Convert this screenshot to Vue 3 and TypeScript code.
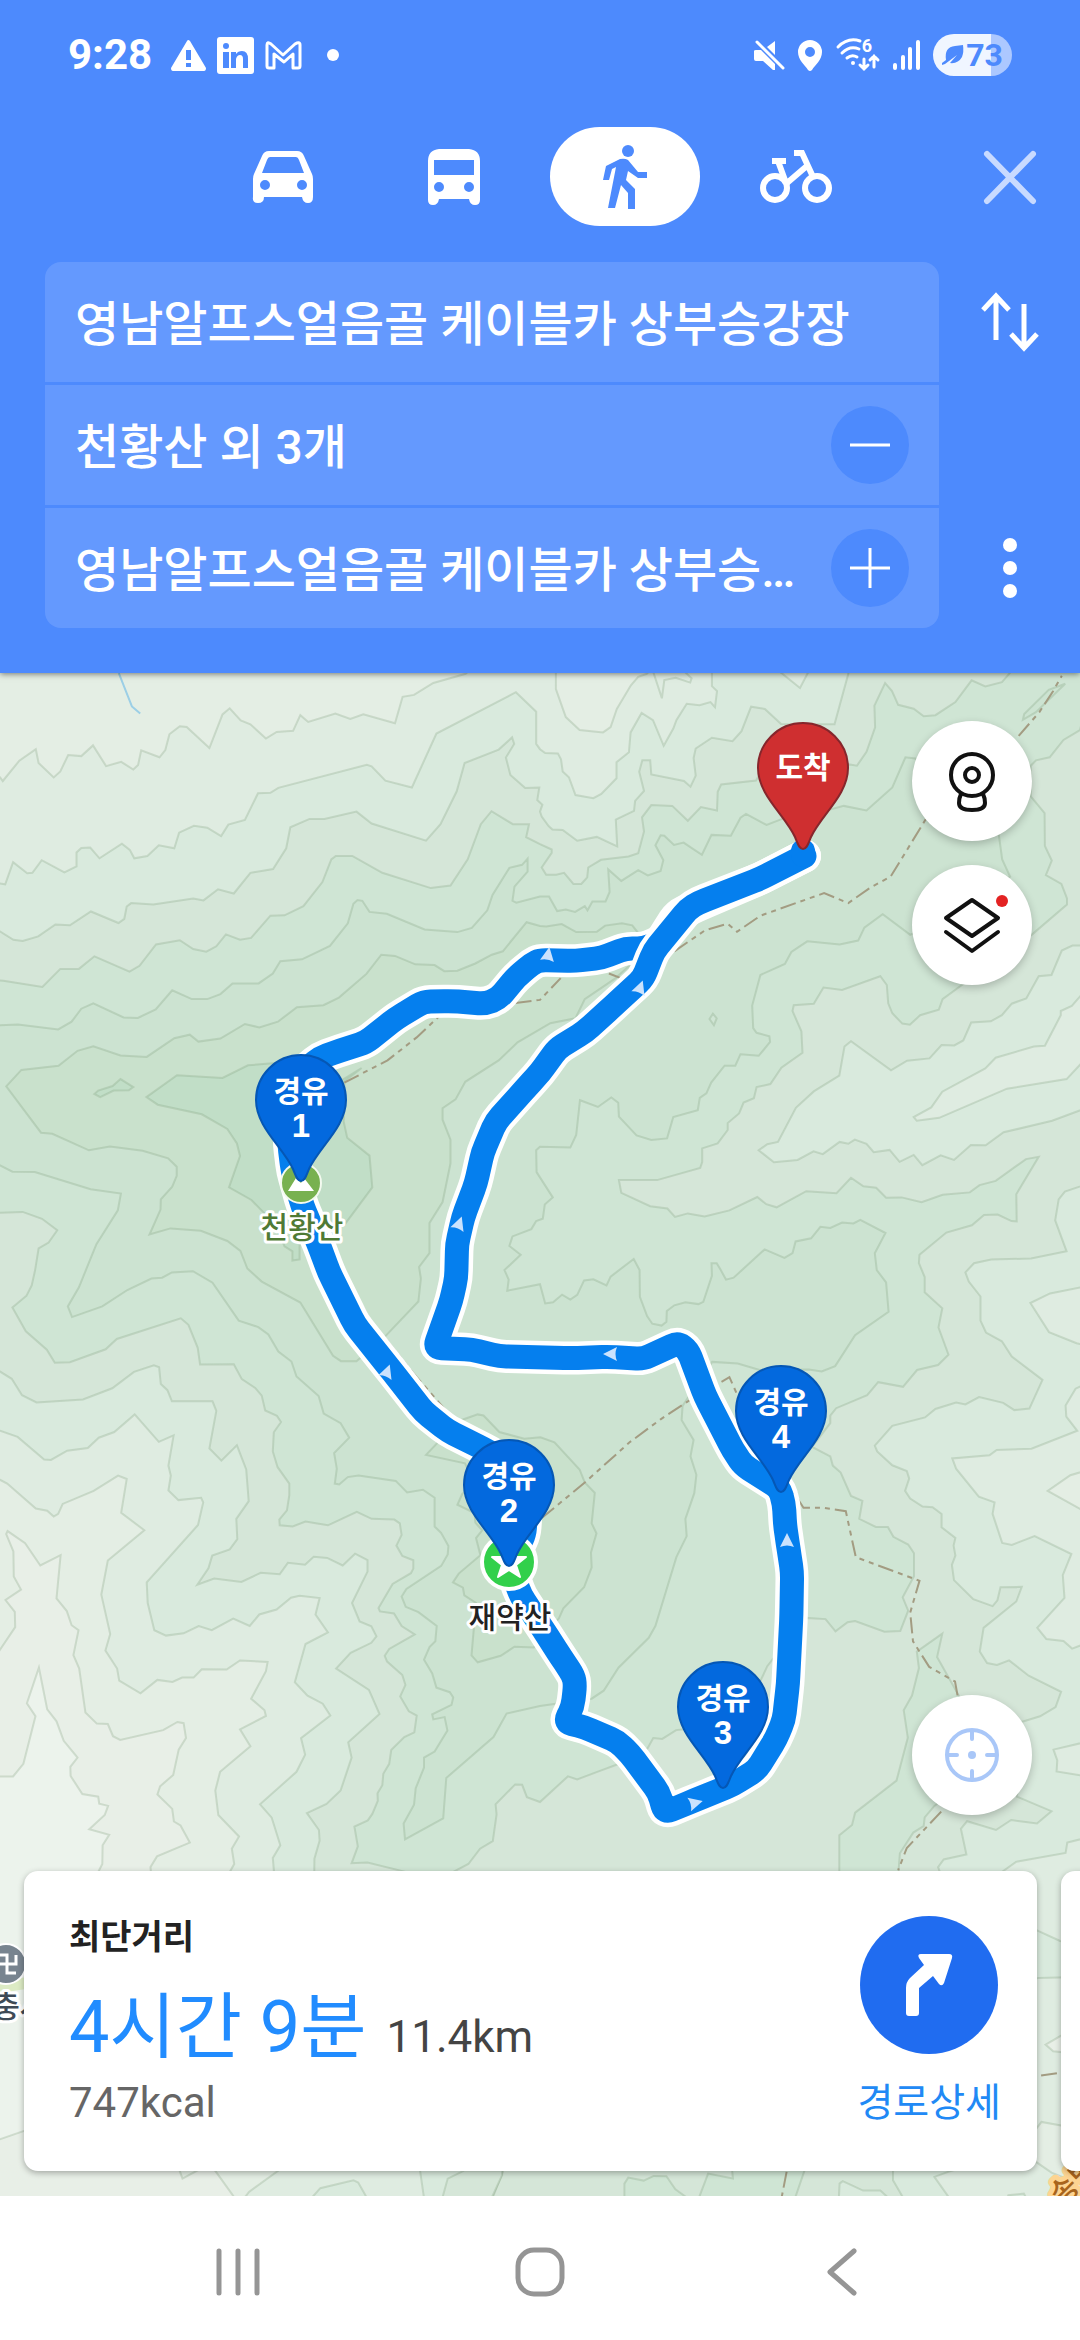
<script setup lang="ts">
import { ref } from 'vue'

type Tile = 'A' | 'B' | 'C' | 'D' | 'E' | 'F'

// Survey tiles: x origin, y origin and vertical scale on the shared survey grid.
const tiles: Record<Tile, [number, number, number]> = {
  A: [0, 0, 1],
  B: [1568, 0, 1],
  C: [0, 1568, 1],
  D: [1568, 1568, 1],
  E: [0, 3084, 0.871],
  F: [1568, 3084, 0.871],
}

type Point = [number, number]

// Reads "A 0,10 20,30 B 5,6" as a list of map points.
function read(source: string): Point[] {
  let tile = tiles.A
  const out: Point[] = []
  for (const token of source.trim().split(/\s+/)) {
    if (token in tiles) {
      tile = tiles[token as Tile]
      continue
    }
    const [x, y] = token.split(',').map(Number)
    out.push([Math.round((x + tile[0]) * 3.444) / 10, Math.round((y * tile[2] + tile[1]) * 3.827) / 10])
  }
  return out
}

function trace(source: string): string {
  return read(source).map((p) => p.join(',')).join(' ')
}

// Same trace, with every bend eased by a short curve.
function curve(source: string, radius = 7): string {
  const pts = read(source)
  const toward = (from: Point, to: Point): string => {
    const length = Math.hypot(to[0] - from[0], to[1] - from[1])
    const t = length === 0 ? 0 : Math.min(radius, length / 2) / length
    return `${(from[0] + (to[0] - from[0]) * t).toFixed(1)} ${(from[1] + (to[1] - from[1]) * t).toFixed(1)}`
  }
  let d = `M${pts[0].join(' ')}`
  for (let i = 1; i < pts.length - 1; i++) {
    d += `L${toward(pts[i], pts[i - 1])}Q${pts[i].join(' ')} ${toward(pts[i], pts[i + 1])}`
  }
  return `${d}L${pts[pts.length - 1].join(' ')}`
}

interface Band {
  fill: string
  shape: string
}

const bands: Band[] = [
  // north slope
  { fill: '#d9eadd', shape: 'A -30,683 0,683 39,705 66,708 111,696 161,665 203,667 264,631 344,661 361,650 368,618 381,609 445,613 561,597 591,602 633,573 679,584 727,530 793,520 831,466 843,411 899,389 942,389 1035,370 1079,401 1237,446 1279,403 1326,317 1349,243 1448,208 1487,176 1493,193 1469,229 1482,274 1525,308 1566,307 1560,340 B 7,352 0,370 5,383 25,408 36,417 66,418 108,446 165,436 224,461 220,391 273,368 276,342 302,316 288,266 297,236 320,236 323,273 418,290 437,305 452,276 446,230 452,205 499,177 559,186 585,160 613,96 653,102 700,141 855,142 895,10 895,-30 A -30,-30' },
  { fill: '#dfece1', shape: 'A -30,558 0,558 15,560 38,502 79,531 94,530 121,497 187,529 222,513 222,477 236,465 262,464 289,492 354,454 377,470 390,492 428,486 461,458 506,466 520,425 563,407 602,412 642,434 663,404 711,392 749,322 785,321 808,308 1065,248 1079,252 1119,289 1196,307 1267,166 1498,58 1557,109 1557,193 B 0,207 15,217 52,218 61,233 66,265 84,280 103,327 155,335 178,324 222,283 222,241 258,215 263,163 295,112 328,131 359,198 387,153 396,131 426,88 463,92 495,84 508,97 514,55 499,42 499,-30 A -30,-30' },
  { fill: '#e4eee4', shape: 'A -30,280 0,280 8,290 56,237 104,207 112,243 156,281 175,265 198,222 236,225 270,197 308,251 352,240 387,260 401,248 410,210 463,228 480,209 492,168 522,147 542,149 608,204 646,116 667,100 699,132 727,142 772,179 803,162 851,159 872,118 895,136 974,114 1017,128 1055,116 1147,139 1169,70 1202,65 1258,34 1352,10 1400,-30 -30,-30' },
  { fill: '#e4eee4', shape: 'B 46,-20 46,50 75,123 115,157 183,163 205,149 223,102 264,40 285,18 310,10 340,-20' },
  { fill: '#dfece1', shape: 'B 327,0 354,74 361,26 394,20 436,33 440,22 415,0' },
  { fill: '#dfece1', shape: 'B 690,0 755,47 782,0' },
  // middle slope
  { fill: '#cfe5d4', shape: 'A -30,810 10,812 123,828 175,781 229,781 274,748 376,788 405,773 453,717 522,706 561,729 599,736 628,722 656,691 697,705 729,700 785,642 826,641 881,617 936,554 962,495 975,486 1023,486 1110,530 1251,570 1308,563 1358,495 1396,403 1427,369 1489,403 1536,403 1528,437 1568,455 B 34,469 34,478 5,516 18,535 47,535 70,530 97,559 120,559 137,542 140,516 177,496 257,487 285,479 302,422 296,385 323,353 384,355 429,394 467,358 514,367 516,318 526,299 627,289 650,250 900,247 920,250 948,214 973,150 971,93 1002,34 1022,55 1040,91 1085,101 1114,121 1148,118 1206,84 1253,27 1293,43 1341,32 1362,10 1400,-30 1620,-30 1568,157 1520,183 1480,228 1440,236 1425,250 1425,330 1465,374 1466,460 1486,498 1469,536 1514,559 1530,597 1530,613 1430,690 1225,823 1169,860 1158,888 1104,902 1074,927 1052,924 1023,897 1011,871 1007,823 988,800 877,836 823,830 795,872 737,876 733,891 759,944 762,1000 701,1039 669,1082 629,1090 621,1119 591,1130 578,1159 545,1184 545,1202 516,1237 471,1250 471,1286 465,1301 340,1333 229,1333 236,1366 320,1401 370,1407 392,1429 429,1420 478,1428 550,1412 631,1377 657,1396 687,1404 773,1362 861,1367 903,1327 939,1349 976,1353 1005,1379 1050,1378 1108,1391 1169,1371 1248,1365 1276,1346 1323,1335 1411,1278 1448,1272 1383,1370 1384,1441 1369,1440 1329,1423 1289,1424 1254,1451 1180,1470 1102,1528 1100,1550 D 1117,18 1117,58 1168,100 1157,150 1186,221 1156,248 1095,261 1054,305 982,293 950,327 860,361 843,380 843,400 790,462 843,487 850,511 873,529 903,590 936,603 927,650 975,671 1010,671 1026,697 1069,717 1086,740 1086,800 1053,855 1069,890 1046,943 1000,945 915,917 893,920 858,944 829,912 770,909 690,1000 660,1035 600,1150 420,1200 395,1202 355,1225 329,1223 312,1250 230,1290 170,1310 108,1331 81,1323 0,1390 C 1530,1377 1516,1345 1496,1344 1439,1396 1442,1422 1431,1492 1394,1512 1360,1552 1311,1575 1180,1573 1067,1548 1021,1550 1039,1506 1029,1454 1068,1438 1081,1421 1097,1387 1096,1367 1110,1346 1113,1316 1130,1290 1136,1254 1174,1220 1203,1208 1210,1164 1187,1153 1162,1114 1177,1084 1168,1058 1124,1023 1117,1008 1130,990 1204,952 1166,930 1144,897 1103,892 1099,883 1140,820 1193,792 1200,780 1200,758 1168,747 1151,720 1166,692 1161,662 1145,652 1079,650 1036,632 952,667 887,657 850,670 812,667 811,652 833,628 840,588 840,558 806,515 792,474 795,424 816,397 804,381 770,367 760,328 741,308 702,285 679,246 581,247 574,203 547,143 525,126 339,180 307,207 203,241 159,242 136,208 75,160 36,98 77,67 92,40 A 102,1568 112,1511 141,1496 166,1464 122,1434 66,1416 -30,1419' },
  { fill: '#cce3d1', shape: 'A -30,930 52,926 169,939 208,919 236,885 271,871 359,908 400,909 452,887 500,837 557,860 602,860 640,847 675,819 751,819 792,793 814,761 877,756 958,721 1010,662 1026,611 1038,601 1052,603 1073,632 1123,637 1233,678 1328,685 1370,674 1415,628 1430,588 1479,517 1516,509 1532,493 1532,527 1494,566 1488,603 1499,608 1568,592 B 26,592 50,630 75,626 102,632 130,617 138,628 152,605 190,605 202,580 198,521 236,551 285,523 313,537 350,525 358,497 335,458 350,432 361,433 389,457 417,451 470,483 498,431 554,433 582,386 598,376 658,405 720,383 820,370 882,355 948,367 1023,307 1061,228 1090,231 1332,430 1342,495 1365,540 1200,640 1075,692 995,638 942,673 924,707 870,717 776,709 730,737 711,768 640,797 616,877 619,936 629,948 666,957 668,972 635,1008 582,1004 567,1034 536,1034 497,1078 483,1106 464,1118 458,1150 387,1168 369,1224 323,1228 280,1216 229,1167 227,1131 207,1117 168,1142 116,1124 105,1215 88,1248 0,1246 A 1557,1255 1558,1312 B 37,1378 14,1397 8,1434 A 1557,1440 1543,1461 1488,1480 1479,1505 1512,1528 1465,1568 C 1477,25 1473,54 1568,37 D 15,87 38,84 64,64 88,77 108,65 128,27 155,24 193,40 205,17 B 272,1539 D 289,0 290,70 311,120 326,140 353,145 367,135 368,107 390,92 422,84 460,89 474,83 499,15 B 498,1550 513,1550 D 525,0 540,25 562,20 B 652,1514 710,1536 733,1524 742,1493 787,1485 814,1455 843,1458 877,1444 910,1446 930,1437 1003,1471 972,1524 D 978,0 1005,32 1012,109 915,170 857,251 818,265 780,260 640,262 574,244 500,240 414,355 411,392 446,444 437,487 454,535 448,583 422,650 426,695 396,750 335,930 316,961 228,1039 185,1099 150,1120 0,1139 C 1471,1159 1433,1220 1296,1327 1287,1433 1176,1488 1172,1446 1202,1397 1207,1354 1231,1300 1231,1274 1262,1258 1299,1203 1291,1168 1258,1174 1255,1161 1311,1136 1316,1117 1306,1103 1267,1091 1255,1054 1231,1018 1247,985 1264,970 1268,930 1215,894 1178,880 1166,853 1180,833 1281,773 1300,743 1302,721 1281,687 1262,670 1262,595 1228,574 1182,581 1149,551 1041,537 1010,541 985,560 972,558 978,519 970,478 1014,438 989,400 940,375 925,329 861,278 846,239 808,213 779,168 750,149 693,132 617,33 560,3 499,6 471,20 440,22 370,52 297,95 209,123 197,95 229,45 A 280,1500 342,1412 351,1368 263,1357 101,1312 36,1311 -30,1280' },
  { fill: '#c9e1cc', shape: 'A 18,1088 62,1045 170,1034 225,995 271,983 350,1007 426,1011 506,962 551,953 576,971 640,963 711,925 753,934 807,919 862,881 939,876 984,856 1064,794 1107,744 1147,747 1206,769 1262,771 1290,787 1328,786 1380,767 1428,744 1460,735 1529,659 1568,669 B 18,670 63,664 105,685 165,684 189,668 238,662 268,667 283,685 265,768 220,805 130,860 103,910 30,923 A 1503,973 1448,1020 1351,1076 1323,1122 1285,1145 1285,1175 1308,1227 1308,1289 1285,1390 1247,1445 1247,1524 1217,1560 1222,1590 1215,1650 1120,1740 1035,1806 990,1806 967,1792 872,1653 760,1598 718,1564 698,1518 660,1492 583,1465 495,1459 434,1475 466,1410 467,1383 500,1350 513,1322 513,1298 488,1276 414,1256 319,1245 258,1255 152,1212 119,1209' },
  { fill: '#c1dec7', shape: 'A 425,1116 514,1059 646,1066 720,1033 800,1027 960,1090 1050,1040 1000,1075 998,1180 1008,1222 1073,1269 1081,1352 1000,1450 870,1500 870,1540 849,1543 849,1519 826,1506 800,1450 730,1385 665,1352 697,1270 688,1237 660,1199 586,1161 458,1136' },
  { fill: '#c1dec7', shape: 'A 274,1108 285,1099 327,1087 350,1069 387,1090 374,1098 330,1099 291,1116' },
  { fill: '#c9e1cc', shape: 'C 1237,483 1330,395 1387,377 1404,380 1450,423 1522,441 D 1,437 42,450 115,521 130,555 159,582 150,662 164,688 148,738 150,777 128,829 68,884 55,910 C 1550,986 1494,984 1454,1008 1387,1025 1369,1007 1382,870 1348,850 1344,830 1315,816 1332,793 1395,745 1382,700 1400,680 1380,660 1378,635 1328,613 1342,585 1380,560 1350,505' },
  { fill: '#cfe5d4', shape: 'B 492,912 502,898 513,910 505,928' },
  { fill: '#cce3d1', shape: 'B 1402,130 1406,115 1477,52 1525,36 1440,110' },
  // east valleys
  { fill: '#d9eadd', shape: 'B 1600,720 1546,720 1515,733 1485,797 1448,800 1412,858 1370,872 1341,902 1309,918 1252,921 1229,968 1203,981 1166,980 1131,1015 1066,1021 1019,1046 903,970 884,984 869,1060 795,1101 743,1144 691,1233 660,1239 635,1255 679,1286 748,1280 794,1258 821,1265 870,1233 895,1238 914,1227 948,1238 969,1260 1015,1254 1044,1285 1085,1267 1110,1294 1163,1268 1202,1280 1251,1241 1294,1242 1346,1208 1487,1178 1600,1140' },
  { fill: '#dfece1', shape: 'B 1600,1000 1529,1069 1356,1094 1159,1170 1094,1178 1085,1168 1136,1143 1168,1102 1293,1041 1323,1013 1434,984 1466,982 1512,902 1512,891 1544,878 1600,820' },
  { fill: '#d9eadd', shape: 'B 1600,1340 1524,1363 1506,1383 1496,1438 1529,1519 1426,1538 1310,1540 1260,1550 D 1235,6 1245,30 1279,69 1279,132 1295,163 1341,186 1370,226 1459,287 1421,362 1377,366 1345,347 1275,332 1235,351 1208,346 1148,363 1118,385 1023,407 972,459 979,474 1023,510 1065,525 1072,545 1060,577 1075,597 1111,618 1140,620 1166,637 1166,672 1206,700 1201,720 1206,746 1196,770 1202,810 1258,860 1314,878 1328,863 1337,829 1399,828 1383,866 1288,935 1277,997 1298,1027 1327,1032 1362,1020 1419,1060 1513,1102 1497,1142 1452,1166 1400,1180 1385,1376 1485,1414 1443,1446 1368,1437 1324,1463 1240,1440 1222,1460 1238,1527 1172,1540 1156,1560 1180,1620 1100,1900 F 1025,965 1025,990 1070,1070 1650,1070' },
  { fill: '#dfece1', shape: 'D 1600,40 1481,61 1424,86 1478,162 1558,191 1600,200' },
  { fill: '#dfece1', shape: 'D 1600,290 1555,310 1526,354 1528,383 1560,420 1427,467 1326,470 1305,484 1197,492 1208,519 1274,592 1320,607 1314,637 1342,713 1370,718 1436,695 1543,742 1518,797 1523,857 1444,935 1470,964 1520,969 1545,989 1600,970' },
  { fill: '#e4eee4', shape: 'D 1600,520 1540,536 1474,577 1600,640' },
  { fill: '#dfece1', shape: 'D 1600,1230 1491,1253 1502,1281 1500,1310 1600,1325' },
  { fill: '#dfece1', shape: 'D 1600,1480 1531,1496 1526,1523 1383,1546 1330,1580 F 1400,220 1510,272 1600,280' },
  { fill: '#dfece1', shape: 'F 1400,400 1447,383 1600,380 1600,1070 1200,1060 1145,980 1185,965 1400,900' },
  { fill: '#e8efe7', shape: 'F 1600,500 1513,556 1468,583 1490,603 1600,615' },
  { fill: '#e4eee4', shape: 'F 1430,850 1456,815 1513,826 1600,840 1600,990 1540,990 1485,967 1440,935' },
  { fill: '#cfe5d4', shape: 'D 1094,997 1168,950 1153,1011 1216,1112 1250,1200 1220,1350 1145,1400 1117,1430 1114,1453 1084,1470 1045,1524 1030,1700 869,1700 869,1477 906,1450 915,1418 1035,1334 1068,1222 1056,1150 1080,1112 1100,1040' },
  { fill: '#cfe5d4', shape: 'F 245,1060 245,1000 256,982 301,991 330,977 367,978 393,1017 450,1060' },
  { fill: '#cfe5d4', shape: 'F 455,1060 488,970 560,985 556,940 775,940 735,1060' },
  { fill: '#d9eadd', shape: 'F 867,1060 870,1000 879,993 938,1021 988,1021 1030,1060' },
  { fill: '#d9eadd', shape: 'F 1350,1060 1360,1035 1405,1030 1420,1060' },
  // west slope
  { fill: '#d9eadd', shape: 'C -30,265 0,265 34,284 64,327 106,346 241,338 326,309 389,266 447,249 462,254 467,298 486,314 499,343 617,343 628,368 608,466 643,498 688,458 715,521 722,604 686,650 689,703 667,730 616,746 605,779 573,822 622,806 701,815 757,791 812,795 836,765 886,770 911,749 950,752 995,772 1031,741 1067,758 1067,788 1022,870 1044,918 1078,931 1093,957 1078,974 1018,1000 976,1041 1071,1097 1102,1160 1011,1234 1021,1274 989,1360 948,1395 891,1419 926,1463 928,1491 913,1538 912,1620 E 1300,700 1460,965 1420,1070 -30,1070' },
  { fill: '#dfece1', shape: 'C -30,420 0,420 51,436 128,495 148,496 195,472 255,465 287,438 332,423 391,377 461,449 504,432 489,511 496,537 489,576 518,601 584,595 590,607 575,666 426,816 429,870 448,941 482,955 533,949 577,930 615,941 677,911 725,930 753,900 803,887 845,856 870,851 928,857 916,900 952,947 887,977 856,1077 893,1112 937,1133 959,1164 874,1223 886,1266 861,1311 755,1396 789,1431 814,1503 792,1536 800,1620 E 1218,950 1235,1070 -30,1070' },
  { fill: '#e4eee4', shape: 'C -30,548 0,548 21,558 104,623 137,629 156,644 169,637 182,611 272,577 343,537 368,546 352,634 419,680 313,759 294,848 320,951 306,994 340,1041 346,1073 408,1106 457,1071 501,1076 529,1065 562,1065 586,1043 658,1044 697,1020 777,1024 772,1048 729,1120 768,1150 772,1165 697,1200 727,1244 639,1311 625,1360 634,1424 694,1480 673,1512 680,1552 650,1600 E 850,930 723,1025 690,1070 -30,1070' },
  { fill: '#e8efe7', shape: 'C -30,1030 0,992 44,933 43,893 16,862 61,835 40,801 39,735 18,690 22,682 73,714 117,772 176,745 164,858 194,891 208,928 228,941 213,1006 230,1041 248,1156 281,1185 313,1186 328,1218 349,1228 474,1202 515,1181 533,1184 540,1223 519,1253 503,1319 465,1349 457,1370 500,1408 505,1441 524,1451 551,1496 456,1532 437,1560 E 500,900 530,985 610,940 700,1070 -30,1070' },
  { fill: '#ecf3ec', shape: 'C -30,1323 38,1323 68,1290 103,1166 78,1132 113,1039 137,1148 164,1179 185,1230 225,1274 204,1298 205,1322 239,1369 285,1376 288,1394 314,1400 304,1424 259,1461 317,1476 298,1503 297,1552 270,1600 E 200,800 70,842 -30,878' },
  { fill: '#d9eadd', shape: 'E 890,1060 930,1014 1026,990 1040,997 1075,1060' },
  { fill: '#d5e6d8', shape: 'E 1280,1060 1300,985 1350,960 1458,960 1458,975 1420,1060' },
]

const trails: string[] = [
  'A 1000,1078 1125,1020 1210,960 1275,905',
  'A 1497,870 1568,862 B 60,805',
  'B 200,793 235,805 262,795',
  'B 390,735 480,680 545,663 572,684 640,642 825,583 895,609 960,568 1018,540 1120,390',
  'B 1390,172 1450,110 1490,55 1515,15',
  'C 1050,90 1080,140 1120,180 1160,225 1210,280 1300,372',
  'D 5,648 130,555 260,450 350,390 435,340',
  'D 527,292 550,280 575,330',
  'D 750,600 765,621 820,621 888,630 917,750 1102,812 1075,895 1083,970 1130,1037 1205,1075 1213,1115',
  'D 1165,1415 1065,1510 1040,1568',
  'F 1455,676 1513,667',
  'F 716,965 700,1050',
]

const routeLegs: string[] = [
  'B 768,486 640,545 470,610 400,640 350,710 300,728 250,727 180,752 100,760 0,758 A 1545,768 1500,802 1448,858 1410,872 1310,865 1230,867 1150,910 1062,973 985,995 930,1013 880,1050 845,1130 840,1240 850,1310 878,1400 925,1500 C 955,5 1030,142 1130,255 1230,370 1300,420 1400,465 1490,510 1530,600 1523,690 1480,770',
  'C 1480,770 1512,850 D 10,940 60,1010 97,1060 102,1085 95,1140 72,1182 130,1195 225,1232 262,1265 345,1365 362,1418 450,1385 560,1345 630,1305 685,1225 708,1175 720,1080 730,900 732,790 722,730 712,670 708,610 695,570 590,510 560,470 480,330 430,210 400,190 300,232 200,227 90,230 C 1450,225 1370,208 1262,203 1310,80 1325,20 A 1327,1500 1345,1430 1382,1340 1402,1260 1440,1180 1530,1090 B 0,1052 50,990 130,945 210,880 300,805 330,735 430,625 460,608 640,545 768,486',
]

const arrows = [
  { x: 548, y: 285, turn: 10 },
  { x: 640, y: 318, turn: 20 },
  { x: 459, y: 554, turn: 20 },
  { x: 387, y: 702, turn: 20 },
  { x: 611, y: 684, turn: -90 },
  { x: 787, y: 871, turn: 0 },
  { x: 695, y: 1133, turn: 75 },
]

const pins = [
  { x: 301, y: 511, no: '1' },
  { x: 509, y: 896, no: '2' },
  { x: 723, y: 1118, no: '3' },
  { x: 781, y: 822, no: '4' },
]

const pinPath = 'M0 0c-4 0-5-5-8-12c-10-22-37-42-37-69a45 45 0 0 1 90 0c0 27-27 47-37 69c-3 7-4 12-8 12z'

const origin = ref('영남알프스얼음골 케이블카 상부승강장')
const via = ref('천황산 외 3개')
const destination = ref('영남알프스얼음골 케이블카 상부승강장')
const mode = ref('walk')
</script>

<template>
  <div class="screen">
    <header class="header">
      <div class="status">
        <div class="status-left">
          <span class="clock">9:28</span>
          <svg width="35" height="31" viewBox="0 0 35 31" aria-hidden="true">
            <path fill="#fff" fill-rule="evenodd" d="M16 1q1-2 3 0l16 27q0 3-2 3H2q-2 0-2-3zM15 10h5v10h-5zM15 23h5v4h-5z" />
          </svg>
          <svg width="37" height="37" viewBox="0 0 37 37" aria-hidden="true">
            <rect width="37" height="37" rx="3" fill="#fff" />
            <circle cx="9" cy="9" r="3" fill="#4d8afd" />
            <path fill="#4d8afd" d="M6 15h6v16H6zM14 15h5v2q2-3 6-3 6 0 6 8v9h-5v-9q0-4-3-4t-4 4v9h-5z" />
          </svg>
          <svg width="37" height="29" viewBox="0 0 37 29" aria-hidden="true">
            <path fill="none" stroke="#fff" stroke-width="3" stroke-linejoin="round" d="M9 27H4q-2 0-2-2V4q0-4 4-1l12 11L30 3q5-3 5 1v21q0 2-2 2h-5V13l-9 8-10-8z" />
          </svg>
          <span class="dot"></span>
        </div>
        <div class="status-right">
          <svg width="31" height="31" viewBox="0 0 31 31" aria-hidden="true">
            <path fill="#fff" d="M0 11q0-1 2-1h5l14 14v6h-2L9 21H2q-2 0-2-2zM13 7l8-6v14z" />
            <path d="M3 2l26 26" stroke="#fff" stroke-width="3" stroke-linecap="round" />
          </svg>
          <svg width="25" height="31" viewBox="0 0 25 31" aria-hidden="true">
            <path fill="#fff" fill-rule="evenodd" d="M12 0a12 12 0 0 1 12 12c0 8-7 13-10 18q-2 2-4 0C7 25 0 20 0 12A12 12 0 0 1 12 0zm0 7a5 5 0 1 0 0 10 5 5 0 0 0 0-10z" />
          </svg>
          <svg width="44" height="34" viewBox="0 0 44 34" aria-hidden="true">
            <g fill="none" stroke="#fff" stroke-width="3" stroke-linecap="round">
              <path d="M2 9q10-10 22-6M6 15q8-8 17-4M11 20q5-4 10-1" />
              <path d="M28 21v10M24 27l4 4 4-4M38 29V18M34 22l4-4 4 4" />
            </g>
            <circle cx="17" cy="25" r="2" fill="#fff" />
            <text x="31" y="14" text-anchor="middle" class="wifi-no">6</text>
          </svg>
          <svg width="27" height="31" viewBox="0 0 27 31" aria-hidden="true">
            <path d="M2 25v3M10 17v11M17 9v19M25 2v26" stroke="#fff" stroke-width="4" stroke-linecap="round" />
          </svg>
          <span class="battery">
            <svg width="22" height="22" viewBox="0 0 22 22" aria-hidden="true">
              <path fill="#4d8afd" d="M4 16Q2 3 13 2l8-1q1 7-1 12-4 7-12 6l7-8-12 9-3 1v-2z" />
            </svg>
            <span>73</span>
          </span>
        </div>
      </div>

      <div class="modes">
        <nav class="tabs" aria-label="이동수단">
          <button type="button" class="tab" :class="{ active: mode === 'car' }" aria-label="자동차" @click="mode = 'car'">
            <svg width="60" height="54" viewBox="0 0 60 54">
              <path fill="currentColor" fill-rule="evenodd" d="M16 1h28q5 0 7 5l8 18q1 2 1 5v18q0 6-5 6t-6-6H11q0 6-6 6t-5-6V29q0-3 1-5L9 6q2-5 7-5zm1 6q-2 0-3 3L9 23h42L46 10q-1-3-3-3zM12 30a5 5 0 1 0 0 10 5 5 0 0 0 0-10zm37 0a5 5 0 1 0 0 10 5 5 0 0 0 0-10z" />
            </svg>
          </button>
          <button type="button" class="tab" :class="{ active: mode === 'bus' }" aria-label="대중교통" @click="mode = 'bus'">
            <svg width="52" height="56" viewBox="0 0 52 56">
              <path fill="currentColor" fill-rule="evenodd" d="M11 0h30q11 1 11 12v39q0 5-5 5t-6-6H11q-1 6-6 6t-5-5V12Q0 1 11 0zM6 11v15h40V11zm5 22a5 5 0 1 0 0 10 5 5 0 0 0 0-10zm30 0a5 5 0 1 0 0 10 5 5 0 0 0 0-10z" />
            </svg>
          </button>
          <button type="button" class="tab" :class="{ active: mode === 'walk' }" aria-label="도보" @click="mode = 'walk'">
            <svg width="44" height="64" viewBox="0 0 44 64">
              <circle cx="25" cy="6" r="6" fill="currentColor" />
              <path fill="currentColor" d="M3 21l14-7q5-1 8 1l10 12h9v6h-9l-10-7-2 9 9 9v20h-7V48l-7-8-6 23H5l8-41-4 2-3 11H0z" />
            </svg>
          </button>
          <button type="button" class="tab" :class="{ active: mode === 'bike' }" aria-label="자전거" @click="mode = 'bike'">
            <svg width="72" height="54" viewBox="0 0 72 54" fill="none" stroke="currentColor" stroke-width="6">
              <circle cx="15" cy="38" r="12" />
              <circle cx="57" cy="38" r="12" />
              <path d="M12 11h14M18 11l8 22M34 3h8l12 26M48 15L27 33" />
            </svg>
          </button>
        </nav>
        <button type="button" class="icon-btn" aria-label="닫기">
          <svg width="54" height="54" viewBox="0 0 54 54">
            <path d="M4 4l46 47M50 4L4 51" stroke="#c8daff" stroke-width="6" stroke-linecap="round" />
          </svg>
        </button>
      </div>

      <div class="route-form">
        <div class="fields">
          <div class="field">
            <input v-model="origin" type="text" aria-label="출발지" />
          </div>
          <div class="field">
            <input v-model="via" type="text" aria-label="경유지" />
            <button type="button" class="round" aria-label="경유지 삭제">
              <svg width="40" height="40" viewBox="0 0 40 40"><path d="M0 20h40" stroke="#fff" stroke-width="3" /></svg>
            </button>
          </div>
          <div class="field">
            <input v-model="destination" type="text" aria-label="도착지" />
            <button type="button" class="round" aria-label="경유지 추가">
              <svg width="40" height="40" viewBox="0 0 40 40"><path d="M0 20h40M20 0v40" stroke="#fff" stroke-width="3" /></svg>
            </button>
          </div>
        </div>
        <div class="side">
          <button type="button" class="icon-btn tall" aria-label="출발지와 도착지 바꾸기">
            <svg width="58" height="58" viewBox="0 0 58 58" fill="none" stroke="#fff" stroke-width="5">
              <path d="M15 47V4M2 17L15 3l13 14M43 11v43M30 41l13 14 13-14" />
            </svg>
          </button>
          <button type="button" class="icon-btn tall" aria-label="더보기">
            <svg width="14" height="60" viewBox="0 0 14 60" fill="#fff">
              <circle cx="7" cy="7" r="7" /><circle cx="7" cy="30" r="7" /><circle cx="7" cy="53" r="7" />
            </svg>
          </button>
        </div>
      </div>
    </header>

    <main class="map">
      <svg class="terrain" viewBox="0 3 1080 1523" preserveAspectRatio="xMidYMid slice" role="img" aria-label="도보 경로 지도">
        <rect y="-200" width="1080" height="2000" fill="#d5e6d8" />
        <polygon v-for="(band, i) in bands" :key="i" class="band" :points="trace(band.shape)" :fill="band.fill" />
        <polyline :points="trace('A 345,8 383,95 407,114')" class="stream" />
        <polyline v-for="(trail, i) in trails" :key="i" class="trail" :points="trace(trail)" />

        <template v-for="(leg, i) in routeLegs" :key="i">
          <path class="casing" :d="curve(leg)" />
          <path class="route" :d="curve(leg)" />
        </template>
        <path class="route-start" d="M803 181v4" />
        <path
          v-for="(a, i) in arrows"
          :key="i"
          d="M0-8l7 14q-7-3-14 0z"
          fill="#cbe2fd"
          :transform="`translate(${a.x} ${a.y}) rotate(${a.turn})`"
        />

        <g>
          <circle cx="301" cy="513" r="20" fill="#78b150" stroke="#f4faf0" stroke-width="2" />
          <path fill="#fff" d="M288 521l8-13 5 5 3-5 10 13z" />
          <text x="302" y="568" class="poi peak">천황산</text>
        </g>
        <g>
          <circle cx="509" cy="892" r="27" fill="#32d04b" stroke="#fff" stroke-width="4" />
          <path fill="#fff" stroke="#fff" stroke-width="2" stroke-linejoin="round" d="M509 875l4 12h13l-10 8 4 12-11-7-11 7 4-12-10-8h13z" />
          <text x="510" y="958" class="poi">재약산</text>
        </g>
        <g>
          <path fill="#dcebc4" d="M0 1313l26-6v12l-26 4z" />
          <circle cx="6" cy="1294" r="20" fill="#78848f" stroke="#fff" stroke-width="2" />
          <path d="M-2 1303v-9h18v-9M-2 1285h9v18h9" fill="none" stroke="#fff" stroke-width="3" />
          <text x="6" y="1347" class="poi temple">표충사</text>
        </g>
        <text x="1062" y="1538" class="road" transform="rotate(-45 1062 1538)">송백로</text>

        <g v-for="pin in pins" :key="pin.no" :transform="`translate(${pin.x} ${pin.y})`">
          <path :d="pinPath" fill="#0369de" stroke="#0557b5" stroke-width="2" />
          <text y="-79" class="pin-label">경유</text>
          <text y="-44" class="pin-no">{{ pin.no }}</text>
        </g>
        <g transform="translate(803 179)">
          <path :d="pinPath" fill="#cf2f30" stroke="#86262c" stroke-width="2" />
          <text y="-71" class="pin-label">도착</text>
        </g>
      </svg>

      <div class="tools">
        <button type="button" class="tool" aria-label="거리뷰">
          <svg width="60" height="60" viewBox="0 0 60 60" fill="none" stroke="#111" stroke-width="4">
            <circle cx="30" cy="24" r="21" />
            <circle cx="30" cy="24" r="7" />
            <path d="M19 43q-2 4-2 9 0 7 13 7t13-7q0-5-2-9" />
          </svg>
        </button>
        <button type="button" class="tool" aria-label="지도 종류">
          <svg width="60" height="60" viewBox="0 0 60 60" fill="none" stroke="#111" stroke-width="4" stroke-linejoin="round" stroke-linecap="round">
            <path d="M30 5l26 18-26 18L4 23zM4 37l26 19 26-19" />
          </svg>
          <span class="badge"></span>
        </button>
      </div>

      <div class="bottom">
        <button type="button" class="tool locate" aria-label="현재 위치">
          <svg width="56" height="56" viewBox="0 0 56 56" fill="none" stroke="#a9c7f8" stroke-width="4" stroke-linecap="round">
            <circle cx="28" cy="28" r="25" />
            <path d="M28 4v8M28 44v8M4 28h9M43 28h9" />
            <circle cx="28" cy="28" r="4" fill="#a9c7f8" stroke="none" />
          </svg>
        </button>
        <div class="cards">
          <section class="card">
            <div class="summary">
              <h2>최단거리</h2>
              <p class="time"><strong>4시간 9분</strong><span>11.4km</span></p>
              <p class="kcal">747kcal</p>
            </div>
            <button type="button" class="detail">
              <span class="detail-icon">
                <svg width="46" height="62" viewBox="0 0 46 62" fill="#fff">
                  <path d="M0 59V34q0-6 4-10l14-13-5-7q-2-4 2-4h28q4 0 3 4l-8 25q-2 4-5 1l-6-8-14 12v25q0 3-3 3H3q-3 0-3-3z" />
                </svg>
              </span>
              <span>경로상세</span>
            </button>
          </section>
          <section class="card next" aria-hidden="true"></section>
        </div>
      </div>
    </main>

    <nav class="system-bar" aria-label="시스템">
      <button type="button" aria-label="최근 앱">
        <svg width="44" height="48" viewBox="0 0 44 48"><path d="M3 3v42M22 3v42M41 3v42" stroke="#959595" stroke-width="5" stroke-linecap="round" /></svg>
      </button>
      <button type="button" aria-label="홈">
        <svg width="48" height="48" viewBox="0 0 48 48"><rect x="2" y="2" width="44" height="44" rx="16" fill="none" stroke="#959595" stroke-width="5" /></svg>
      </button>
      <button type="button" aria-label="뒤로">
        <svg width="30" height="48" viewBox="0 0 30 48"><path d="M27 3L3 24l24 21" fill="none" stroke="#959595" stroke-width="5" stroke-linecap="round" stroke-linejoin="round" /></svg>
      </button>
    </nav>
  </div>
</template>

<style>
body {
  margin: 0;
}
</style>

<style scoped>
.screen {
  display: flex;
  flex-direction: column;
  min-height: 100vh;
  font-family: Roboto, 'Noto Sans CJK KR', sans-serif;
  color: #222;
}

button {
  display: flex;
  align-items: center;
  justify-content: center;
  padding: 0;
  border: 0;
  background: none;
  color: inherit;
  font: inherit;
}

svg {
  display: block;
  flex: none;
  overflow: visible;
}

.header {
  position: relative;
  z-index: 1;
  padding: 30px 0 45px 45px;
  background: #4d8afd;
  box-shadow: 0 1px 6px rgba(0, 0, 0, 0.5);
}

.status {
  display: flex;
  align-items: center;
  justify-content: space-between;
  height: 50px;
  padding: 0 68px 0 23px;
}

.status-left {
  display: flex;
  align-items: center;
  gap: 11px;
}

.clock {
  margin-right: 8px;
  color: #fff;
  font-size: 42px;
  font-weight: 700;
  line-height: 50px;
}

.dot {
  width: 12px;
  height: 12px;
  margin-left: 14px;
  border-radius: 50%;
  background: #fff;
}

.status-right {
  display: flex;
  align-items: center;
  gap: 13px;
}

.wifi-no {
  fill: #fff;
  font-size: 18px;
  font-weight: 700;
}

.battery {
  display: flex;
  align-items: center;
  justify-content: center;
  gap: 2px;
  width: 79px;
  height: 42px;
  border-radius: 21px;
  background: linear-gradient(90deg, #f0f6ff 73%, #acc8ff 73%);
  color: #4d8afd;
  font-size: 32px;
  font-weight: 700;
  line-height: 42px;
}

.modes {
  display: flex;
  align-items: center;
  justify-content: space-between;
  margin-top: 47px;
  padding-left: 163px;
}

.tabs {
  display: flex;
  gap: 21px;
}

.tab {
  width: 150px;
  height: 99px;
  border-radius: 50px;
  color: #fff;
}

.tab.active {
  background: #fff;
  color: #4d8afd;
}

.icon-btn {
  width: 141px;
  height: 99px;
}

.icon-btn.tall {
  height: 120px;
}

.route-form {
  display: flex;
  margin-top: 36px;
}

.fields {
  display: flex;
  flex: 1;
  flex-direction: column;
  gap: 3px;
  min-width: 0;
  overflow: hidden;
  border-radius: 16px;
}

.field {
  display: flex;
  align-items: center;
  gap: 28px;
  height: 120px;
  padding: 0 30px;
  background: #6499fe;
}

.field input {
  flex: 1;
  min-width: 0;
  height: 80px;
  padding: 6px 0 0;
  border: 0;
  outline: 0;
  background: none;
  color: #fff;
  font: 500 48px/80px Roboto, 'Noto Sans CJK KR', sans-serif;
  text-overflow: ellipsis;
}

.round {
  width: 78px;
  height: 78px;
  border-radius: 50%;
  background: #4d8afd;
}

.side {
  display: flex;
  flex-direction: column;
  justify-content: space-between;
}

.map {
  position: relative;
  display: flex;
  flex: 1;
  flex-direction: column;
  justify-content: space-between;
  overflow: hidden;
}

.terrain {
  position: absolute;
  inset: 0;
  width: 100%;
  height: 100%;
}

.band {
  stroke: rgba(120, 150, 115, 0.25);
  stroke-width: 2;
}

.stream {
  fill: none;
  stroke: #9ccfe6;
  stroke-width: 2;
}

.trail {
  fill: none;
  stroke: #a39c82;
  stroke-width: 2;
  stroke-dasharray: 16 5 5 5 5 5;
}

.casing,
.route,
.route-start {
  fill: none;
  stroke-linecap: round;
  stroke-linejoin: round;
}

.casing {
  stroke: #fff;
  stroke-width: 33;
}

.route,
.route-start {
  stroke: #057fee;
  stroke-width: 24;
}

.poi {
  fill: #222;
  stroke: #fff;
  stroke-width: 6;
  stroke-linejoin: round;
  paint-order: stroke;
  font-size: 30px;
  font-weight: 500;
  text-anchor: middle;
}

.poi.peak {
  fill: #4f7a35;
}

.poi.temple {
  fill: #3e4a56;
}

.road {
  fill: #a8641c;
  stroke: #fdd491;
  stroke-width: 10;
  stroke-linejoin: round;
  paint-order: stroke;
  font-size: 30px;
  font-weight: 500;
}

.pin-label,
.pin-no {
  fill: #fff;
  font-weight: 700;
  text-anchor: middle;
}

.pin-label {
  font-size: 30px;
}

.pin-no {
  font-family: 'Liberation Sans', sans-serif;
  font-size: 33px;
}

.tools {
  position: relative;
  display: flex;
  flex-direction: column;
  align-items: flex-end;
  gap: 24px;
  padding: 48px 48px 0 0;
}

.tool {
  position: relative;
  width: 120px;
  height: 120px;
  border-radius: 50%;
  background: #fff;
  box-shadow: 0 3px 9px rgba(0, 0, 0, 0.22);
}

.badge {
  position: absolute;
  top: 30px;
  right: 24px;
  width: 12px;
  height: 12px;
  border-radius: 50%;
  background: #e32222;
}

.bottom {
  position: relative;
  display: flex;
  flex-direction: column;
  align-items: flex-end;
  gap: 56px;
  padding-bottom: 25px;
}

.locate {
  margin-right: 48px;
}

.cards {
  display: flex;
  gap: 24px;
  box-sizing: border-box;
  width: 100%;
  padding-left: 24px;
}

.card {
  display: flex;
  flex: 1;
  justify-content: space-between;
  box-sizing: border-box;
  height: 300px;
  padding: 45px 36px 0 45px;
  border-radius: 14px;
  background: #fff;
  box-shadow: 0 2px 6px rgba(0, 0, 0, 0.3);
}

.card.next {
  flex: none;
  width: 100px;
  margin-right: -81px;
}

.summary h2,
.summary p {
  margin: 0;
}

.summary h2 {
  font-size: 34px;
  font-weight: 700;
  line-height: 42px;
}

.summary .time {
  display: flex;
  align-items: baseline;
  gap: 20px;
  margin-top: 28px;
  line-height: 84px;
}

.time strong {
  color: #218cff;
  font-size: 72px;
  font-weight: 400;
}

.time span {
  color: #444;
  font-size: 44px;
}

.kcal {
  color: #666;
  font-size: 42px;
  line-height: 48px;
}

.detail {
  flex-direction: column;
  justify-content: flex-start;
  gap: 22px;
  align-self: flex-start;
  color: #2189f5;
  font-size: 39px;
  line-height: 54px;
}

.detail-icon {
  display: flex;
  align-items: center;
  justify-content: center;
  width: 138px;
  height: 138px;
  border-radius: 50%;
  background: #206cf0;
}

.system-bar {
  display: flex;
  align-items: center;
  justify-content: center;
  box-sizing: border-box;
  height: 144px;
  padding-top: 8px;
  background: #fff;
}

.system-bar button {
  width: 28%;
  height: 136px;
}
</style>
